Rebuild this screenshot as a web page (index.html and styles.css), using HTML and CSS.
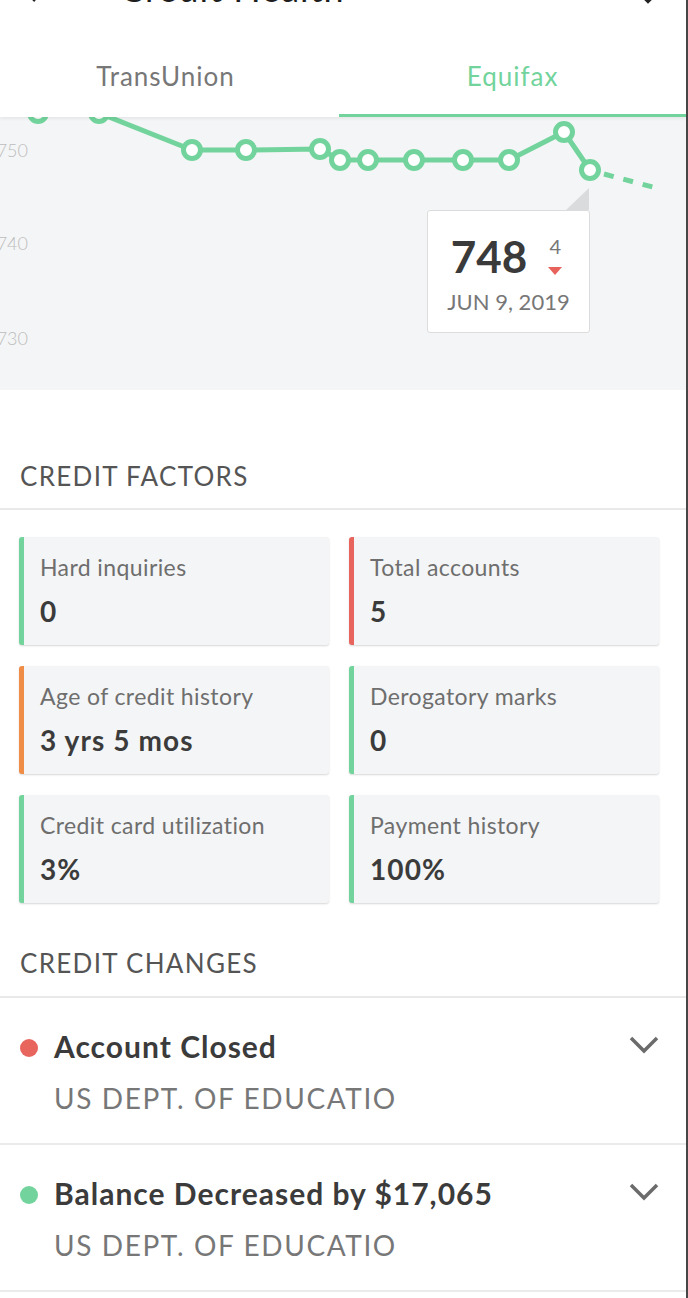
FILE: index.html
```html
<!DOCTYPE html>
<html lang="en">
<head>
<meta charset="utf-8">
<title>Credit Health</title>
<link rel="stylesheet" href="styles.css">
</head>
<body>
<div class="screen">
  <header class="appbar">
    <svg class="appbar-icon icon-back" width="24" height="24" viewBox="0 0 24 24"><path d="M20 12H5M11 5l-7 7 7 7" fill="none" stroke="#222" stroke-width="2.5"/></svg>
    <h1 class="appbar-title">Credit Health</h1>
    <svg class="appbar-icon icon-more" width="24" height="24" viewBox="0 0 24 24"><path d="M5 9l7 7 7-7" fill="none" stroke="#222" stroke-width="2.5"/></svg>
  </header>

  <nav class="tabs">
    <div class="tab tab-first">TransUnion</div>
    <div class="tab tab-active">Equifax</div>
  </nav>

  <section class="chart">
    <svg class="chart-svg" width="686" height="273" viewBox="0 117 686 273">
      <g class="axis">
        <text x="28" y="157" text-anchor="end">750</text>
        <text x="28" y="250" text-anchor="end">740</text>
        <text x="28" y="345" text-anchor="end">730</text>
      </g>
      <polyline class="line" points="38,113 99,113 192,150 246,150 320,149 340,160 368,160 414,160 463,160 509,160 564,132 590,170"/>
      <line class="line-dash" x1="604" y1="174" x2="660" y2="189"/>
      <g class="dots">
        <circle cx="38" cy="113" r="8.5"/>
        <circle cx="99" cy="113" r="8.5"/>
        <circle cx="192" cy="150" r="8.5"/>
        <circle cx="246" cy="150" r="8.5"/>
        <circle cx="320" cy="149" r="8.5"/>
        <circle cx="340" cy="160" r="8.5"/>
        <circle cx="368" cy="160" r="8.5"/>
        <circle cx="414" cy="160" r="8.5"/>
        <circle cx="463" cy="160" r="8.5"/>
        <circle cx="509" cy="160" r="8.5"/>
        <circle cx="564" cy="132" r="8.5"/>
        <circle cx="590" cy="170" r="8.5"/>
      </g>
      <polygon class="pointer" points="566,210 589,188 589,210"/>
    </svg>
    <div class="tooltip">
      <div class="tooltip-top">
        <span class="tooltip-score">748</span>
        <span class="tooltip-delta">
          <span class="delta-num">4</span>
          <span class="delta-arrow"></span>
        </span>
      </div>
      <div class="tooltip-date">JUN 9, 2019</div>
    </div>
  </section>

  <h2 class="section-title">CREDIT FACTORS</h2>

  <div class="factors">
    <div class="factor factor-green">
      <div class="factor-label">Hard inquiries</div>
      <div class="factor-value">0</div>
    </div>
    <div class="factor factor-red">
      <div class="factor-label">Total accounts</div>
      <div class="factor-value">5</div>
    </div>
    <div class="factor factor-orange">
      <div class="factor-label">Age of credit history</div>
      <div class="factor-value">3 yrs 5 mos</div>
    </div>
    <div class="factor factor-green">
      <div class="factor-label">Derogatory marks</div>
      <div class="factor-value">0</div>
    </div>
    <div class="factor factor-green">
      <div class="factor-label">Credit card utilization</div>
      <div class="factor-value">3%</div>
    </div>
    <div class="factor factor-green">
      <div class="factor-label">Payment history</div>
      <div class="factor-value">100%</div>
    </div>
  </div>

  <h2 class="section-title section-title-changes">CREDIT CHANGES</h2>

  <ul class="changes">
    <li class="change">
      <span class="change-dot dot-red"></span>
      <div class="change-body">
        <div class="change-title">Account Closed</div>
        <div class="change-sub">US DEPT. OF EDUCATIO</div>
      </div>
      <svg class="chevron" width="30" height="18" viewBox="0 0 30 18"><polyline points="2,2 15,15 28,2" fill="none" stroke="#6b6b6b" stroke-width="3.5"/></svg>
    </li>
    <li class="change">
      <span class="change-dot dot-green"></span>
      <div class="change-body">
        <div class="change-title">Balance Decreased by $17,065</div>
        <div class="change-sub">US DEPT. OF EDUCATIO</div>
      </div>
      <svg class="chevron" width="30" height="18" viewBox="0 0 30 18"><polyline points="2,2 15,15 28,2" fill="none" stroke="#6b6b6b" stroke-width="3.5"/></svg>
    </li>
  </ul>
</div>
</body>
</html>
```

FILE: styles.css
```css
* { box-sizing: border-box; }

html, body {
  margin: 0;
  padding: 0;
  background: #ffffff;
}

body {
  font-family: "Lato", "Noto Sans", sans-serif;
  color: #3b3b3b;
}

.screen {
  width: 688px;
  height: 1298px;
  overflow: hidden;
  border-right: 2px solid #464646;
  background: #ffffff;
}

/* App bar (mostly scrolled off) */
.appbar {
  height: 40px;
  display: flex;
  align-items: flex-start;
  padding: 0 26px 0 24px;
  gap: 72px;
}

.icon-back {
  margin-top: -18px;
}

.icon-more {
  margin-top: -14px;
}

.appbar-title {
  margin: -30px 0 0 0;
  font-size: 36px;
  line-height: 36px;
  font-weight: 400;
  letter-spacing: 1px;
  color: #1e1e1e;
  flex: 1;
}

/* Tabs */
.tabs {
  position: relative;
  z-index: 2;
  display: flex;
  height: 77px;
  background: #ffffff;
  box-shadow: 0 2px 3px rgba(0, 0, 0, 0.06);
}

.tab {
  flex: 1;
  display: flex;
  align-items: center;
  justify-content: center;
  font-size: 26px;
  letter-spacing: 1px;
  color: #777777;
  padding-bottom: 6px;
}

.tab-first {
  flex: none;
  width: 339px;
  padding-right: 8px;
}

.tab-active {
  color: #72d49c;
  border-bottom: 3px solid #72d49c;
  padding-bottom: 3px;
}

/* Chart */
.chart {
  position: relative;
  height: 273px;
  background: #f4f5f6;
}

.chart-svg {
  display: block;
}

.axis text {
  font-family: "Lato", sans-serif;
  font-size: 18px;
  font-weight: 300;
  fill: #bdbdbd;
}

.line {
  fill: none;
  stroke: #72d49c;
  stroke-width: 5;
  stroke-linejoin: round;
}

.line-dash {
  stroke: #72d49c;
  stroke-width: 5;
  stroke-dasharray: 10 10;
}

.dots circle {
  fill: #ffffff;
  stroke: #72d49c;
  stroke-width: 5;
}

.pointer {
  fill: #d9dbdd;
}

.tooltip {
  position: absolute;
  left: 427px;
  top: 93px;
  width: 163px;
  height: 123px;
  background: #ffffff;
  border: 1px solid #dcdcdc;
  border-radius: 3px;
  display: flex;
  flex-direction: column;
  align-items: center;
  padding-top: 20px;
}

.tooltip-top {
  display: flex;
  align-items: flex-start;
  gap: 21px;
  padding-right: 4px;
}

.tooltip-score {
  font-size: 44px;
  line-height: 50px;
  font-weight: 700;
  color: #3a3a3a;
}

.tooltip-delta {
  display: flex;
  flex-direction: column;
  align-items: center;
  padding-top: 3px;
}

.delta-num {
  font-size: 20px;
  line-height: 24px;
  color: #777777;
}

.delta-arrow {
  margin-top: 9px;
  width: 0;
  height: 0;
  border-left: 7px solid transparent;
  border-right: 7px solid transparent;
  border-top: 8px solid #e8625c;
}

.tooltip-date {
  margin-top: 8px;
  font-size: 22px;
  line-height: 26px;
  color: #777777;
}

/* Section titles */
.section-title {
  margin: 0;
  padding: 71px 20px 0 20px;
  height: 120px;
  font-size: 26px;
  line-height: 30px;
  font-weight: 400;
  letter-spacing: 1.3px;
  color: #555555;
  border-bottom: 2px solid #e9e9e9;
}

.section-title-changes {
  padding-top: 45px;
  height: 95px;
}

/* Factor cards */
.factors {
  display: grid;
  grid-template-columns: 310px 310px;
  column-gap: 20px;
  row-gap: 21px;
  padding: 27px 0 0 19px;
}

.factor {
  height: 108px;
  background: #f4f5f6;
  border-radius: 3px;
  border-left: 5px solid #72d49c;
  box-shadow: 0 1px 2px rgba(0, 0, 0, 0.16);
  padding: 16px 0 0 16px;
}

.factor-green { border-left-color: #72d49c; }
.factor-red { border-left-color: #e8655e; }
.factor-orange { border-left-color: #ef8c45; }

.factor-label {
  font-size: 23px;
  line-height: 28px;
  letter-spacing: 0.4px;
  color: #6e6e6e;
}

.factor-value {
  margin-top: 14px;
  font-size: 28px;
  line-height: 32px;
  font-weight: 700;
  letter-spacing: 1.1px;
  color: #3b3b3b;
}

/* Credit changes */
.changes {
  list-style: none;
  margin: 0;
  padding: 0;
}

.change {
  display: flex;
  align-items: flex-start;
  height: 147px;
  padding: 30px 27px 0 20px;
  border-bottom: 2px solid #ebebeb;
}

.change-dot {
  flex: none;
  width: 18px;
  height: 18px;
  border-radius: 50%;
  margin-top: 11px;
}

.dot-red { background: #e8655e; }
.dot-green { background: #72d49c; }

.change-body {
  flex: 1;
  padding-left: 16px;
}

.change-title {
  font-size: 30px;
  line-height: 36px;
  font-weight: 700;
  letter-spacing: 1px;
  color: #3b3b3b;
}

.change-sub {
  margin-top: 16px;
  font-size: 28px;
  line-height: 36px;
  letter-spacing: 1.6px;
  color: #777777;
}

.chevron {
  flex: none;
  margin-top: 8px;
}
```
